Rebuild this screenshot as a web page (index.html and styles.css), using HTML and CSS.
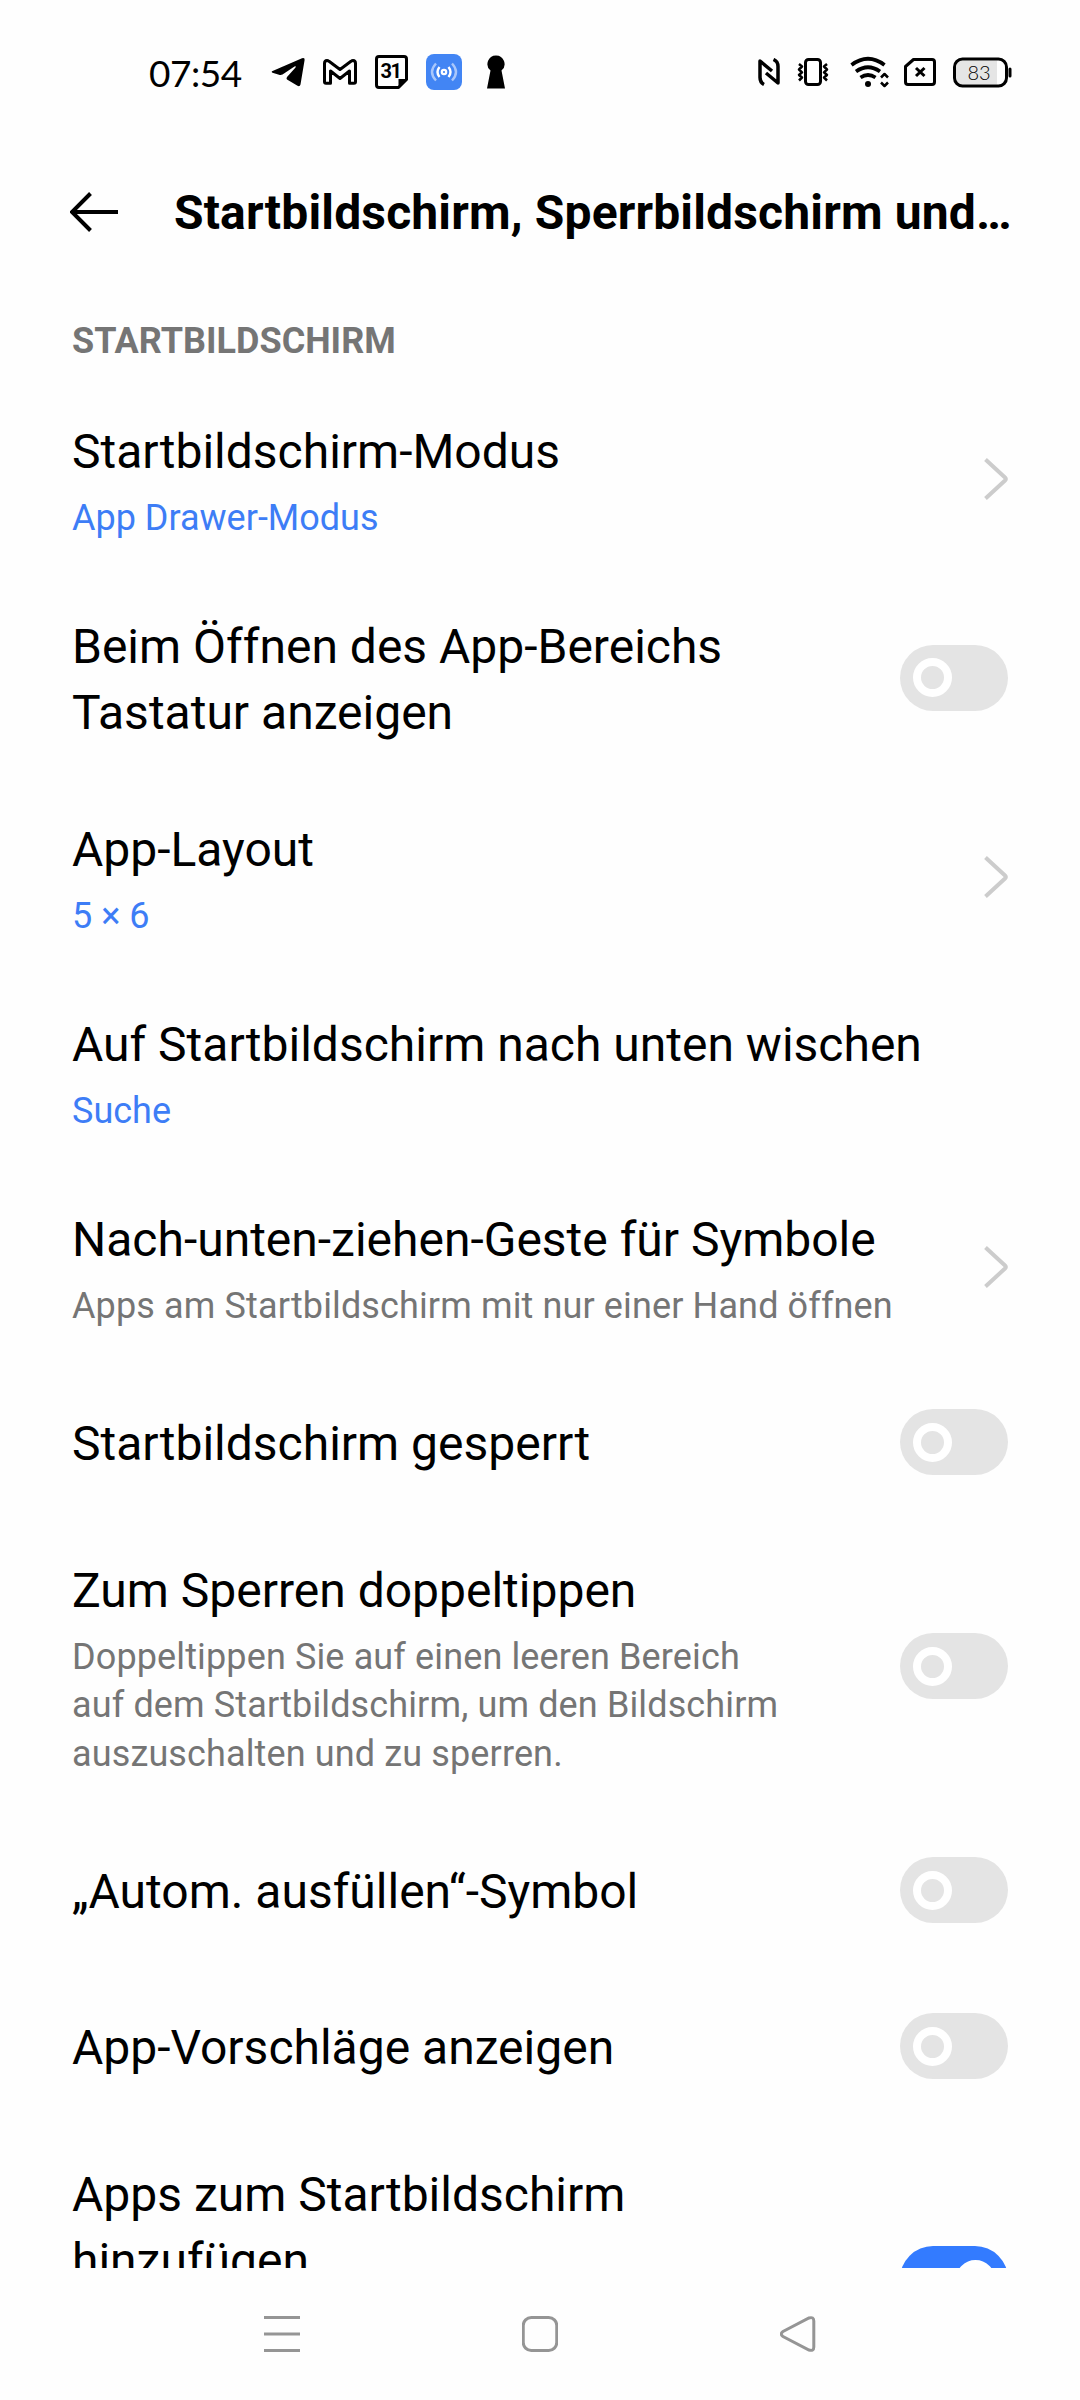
FILE: index.html
```html
<!DOCTYPE html>
<html lang="de">

<head>
    <meta charset="UTF-8">
    <meta name="viewport" content="width=device-width, initial-scale=1.0">
    <title>Startbildschirm</title>
    <link rel="stylesheet" href="styles.css">
</head>

<body>
    <div class="screen">

        <!-- Status bar -->
        <div class="status-bar">
            <div class="status-left">
                <span class="clock">07:54</span>
                <svg class="icon" width="34" height="30" viewBox="0 0 34 30">
                    <path d="M1 14.200 31 1.200Q34 .3 33.600 3L29.500 27.500Q28.800 30 26.500 28.800L16 22.500Q15 21.500 16 20L24.500 10.500Q25.500 8.500 23.500 9.500L11.500 17.500Q10 18.300 8 17.800L1.500 15.800Q0 14.800 1 14.200Z" />
                </svg>
                <svg class="icon line" width="34" height="26" viewBox="0 0 34 26">
                    <path d="M3 24.200q-1.500 0-1.500-1.500V4.500q0-3 2.500-3 1 0 2 .8L17 10.500 28 2.300q1-.8 2-.8 2.500 0 2.500 3v18.200q0 1.500-1.500 1.500h-4.500V12L17 19.500 7.500 12v12.200Z" />
                </svg>
                <svg class="icon line" width="33" height="34" viewBox="0 0 33 34">
                    <path d="M4 1.500h25q2.500 0 2.500 2.500v20.500l-8 8H4q-2.500 0-2.500-2.500V4q0-2.500 2.500-2.500Z" />
                    <path class="solid" d="M31.500 24h-8v8.500Z" />
                    <text class="calendar-day" x="15.500" y="23">31</text>
                </svg>
                <svg class="icon" width="36" height="36" viewBox="0 0 36 36">
                    <rect width="36" height="36" rx="8" fill="#4285f4" />
                    <circle cx="18" cy="18" r="2.200" fill="none" stroke="#fff" stroke-width="2.200" />
                    <path d="M13.500 13q-4 5 0 10M22.500 13q4 5 0 10" fill="none" stroke="#fff" stroke-width="2.400" />
                    <path d="M10 9.500q-8 8.500 0 17M26 9.500q8 8.500 0 17" fill="none" stroke="#a9c7fb" stroke-width="2.400" />
                </svg>
                <svg class="icon keyhole" width="18" height="34" viewBox="0 0 18 34">
                    <path d="M9 .5a8.500 8.500 0 0 1 5.500 15L18 33.500H0L3.500 15.500A8.500 8.500 0 0 1 9 .5Z" />
                </svg>
            </div>
            <div class="status-right">
                <svg class="icon line nfc" width="22" height="28" viewBox="0 0 22 28">
                    <path d="M6 26.500q-4-2-4-7V3L14 13M15.500 1.500q4.500 2 4.500 7V25L8 15" />
                </svg>
                <svg class="icon line" width="32" height="28" viewBox="0 0 32 28">
                    <rect x="8.500" y="1.500" width="15" height="25" rx="3" />
                    <path class="thin" d="M2 6l3 2.500L2 11.500l3 2.800-3 2.700 3 2.500-3 3M30 6l-3 2.500 3 3-3 2.800 3 2.700-3 2.500 3 3" />
                </svg>
                <svg class="icon line wifi" width="40" height="32" viewBox="0 0 40 32">
                    <path d="M2.500 9Q19-3.500 35.500 9M7 15.500Q19 7 31 15.500M11.500 21.500Q19 16.500 26.500 21.500" />
                    <circle class="solid" cx="19" cy="28" r="3" />
                    <path class="thin" d="M32 21.500l3.500-3.500 3.500 3.500M32 26.500l3.500 3.500 3.500-3.500" />
                </svg>
                <svg class="icon line" width="32" height="28" viewBox="0 0 32 28">
                    <path d="M9.500 1.500H28q2.500 0 2.500 2.500v20q0 2.500-2.500 2.500H4q-2.500 0-2.500-2.500V8.500Z" />
                    <path d="M12 10l8.500 8M20.500 10l-8.500 8" />
                </svg>
                <svg class="icon" width="59" height="31" viewBox="0 0 59 31">
                    <path d="M44 3.500H9Q3 3.500 3 9.500v12q0 6 6 6h35Z" fill="#e5e5e5" />
                    <rect x="1.500" y="2" width="52" height="27" rx="8" fill="none" stroke="#000" stroke-width="3" />
                    <rect x="55.500" y="10.500" width="3" height="10" rx="1.500" />
                    <text class="battery-level" x="26" y="22.500">83</text>
                </svg>
            </div>
        </div>

        <!-- Title bar -->
        <div class="title-bar">
            <svg class="back" width="48" height="40" viewBox="0 0 48 40">
                <path d="M20.500 1.500 2 20l18.500 18.500M2 20h46" />
            </svg>
            <h1>Startbildschirm, Sperrbildschirm und…</h1>
        </div>

        <!-- Settings list -->
        <div class="settings">
            <h2>STARTBILDSCHIRM</h2>

            <div class="row">
                <div class="label">
                    <p class="name">Startbildschirm-Modus</p>
                    <p class="value">App Drawer-Modus</p>
                </div>
                <svg class="chevron" width="24" height="42" viewBox="0 0 24 42"><path d="M1.500 1.500 21 19.500q1.500 1.500 0 3L1.500 40.500" /></svg>
            </div>

            <div class="row">
                <div class="label">
                    <p class="name">Beim Öffnen des App-Bereichs Tastatur anzeigen</p>
                </div>
                <div class="switch"></div>
            </div>

            <div class="row">
                <div class="label">
                    <p class="name">App-Layout</p>
                    <p class="value">5 × 6</p>
                </div>
                <svg class="chevron" width="24" height="42" viewBox="0 0 24 42"><path d="M1.500 1.500 21 19.500q1.500 1.500 0 3L1.500 40.500" /></svg>
            </div>

            <div class="row">
                <div class="label">
                    <p class="name">Auf Startbildschirm nach unten wischen</p>
                    <p class="value">Suche</p>
                </div>
            </div>

            <div class="row">
                <div class="label">
                    <p class="name">Nach-unten-ziehen-Geste für Symbole</p>
                    <p class="hint">Apps am Startbildschirm mit nur einer Hand öffnen</p>
                </div>
                <svg class="chevron" width="24" height="42" viewBox="0 0 24 42"><path d="M1.500 1.500 21 19.500q1.500 1.500 0 3L1.500 40.500" /></svg>
            </div>

            <div class="row">
                <div class="label">
                    <p class="name">Startbildschirm gesperrt</p>
                </div>
                <div class="switch"></div>
            </div>

            <div class="row">
                <div class="label">
                    <p class="name">Zum Sperren doppeltippen</p>
                    <p class="hint">Doppeltippen Sie auf einen leeren Bereich auf dem Startbildschirm, um den Bildschirm auszuschalten und zu sperren.</p>
                </div>
                <div class="switch"></div>
            </div>

            <div class="row">
                <div class="label">
                    <p class="name">„Autom. ausfüllen“-Symbol</p>
                </div>
                <div class="switch"></div>
            </div>

            <div class="row">
                <div class="label">
                    <p class="name">App-Vorschläge anzeigen</p>
                </div>
                <div class="switch"></div>
            </div>

            <div class="row last">
                <div class="label">
                    <p class="name">Apps zum Startbildschirm hinzufügen</p>
                </div>
                <div class="switch on"></div>
            </div>
        </div>

        <!-- Navigation bar -->
        <div class="nav-bar">
            <svg width="36" height="36" viewBox="0 0 36 36"><path d="M0 1.500h36M0 18h36M0 34.500h36" /></svg>
            <svg width="36" height="36" viewBox="0 0 36 36"><rect x="1.250" y="1.500" width="33.500" height="33" rx="8" /></svg>
            <svg width="36" height="36" viewBox="0 0 36 36"><path d="M29 2Q33.800 .5 33.800 5v26q0 4.500-4.800 3L3 20.500q-3.500-2.500 0-5Z" /></svg>
        </div>

    </div>
</body>

</html>
```
FILE: styles.css
```css
*,
*::before {
    box-sizing: border-box;
}

body {
    margin: 0;
    background-color: #fefefe;
    color: #000;
    font-family: Roboto, sans-serif;
}

h1,
h2,
p {
    margin: 0;
}

.screen {
    display: flex;
    flex-direction: column;
    width: 1080px;
    height: 2400px;
    overflow: hidden;
}

/* Status bar */
.status-bar {
    display: flex;
    justify-content: space-between;
    flex-shrink: 0;
    height: 144px;
    padding: 0 68px 0 149px;
}

.status-left,
.status-right {
    display: flex;
    align-items: center;
    height: 144px;
}

.status-left {
    gap: 18px;
}

.status-right {
    gap: 17px;
}

.clock {
    width: 104px;
    font-family: Lato, sans-serif;
    font-size: 37px;
    letter-spacing: -0.5px;
}

.keyhole {
    margin-left: 7px;
}

.line {
    fill: none;
    stroke: #000;
    stroke-width: 3;
    stroke-linejoin: round;
}

.nfc {
    stroke-width: 3.5;
}

.wifi {
    margin: 0 -2px 0 3px;
    stroke-width: 3.8;
}

.line .thin {
    stroke-width: 2.5;
}

.line .solid {
    fill: #000;
    stroke: none;
}

.calendar-day {
    fill: #000;
    stroke: none;
    font-size: 20px;
    font-weight: 700;
    letter-spacing: -1.5px;
    text-anchor: middle;
}

.battery-level {
    font-family: Lato, sans-serif;
    font-size: 20px;
    font-weight: 300;
    text-anchor: middle;
}

/* Title bar */
.title-bar {
    display: flex;
    align-items: center;
    flex-shrink: 0;
    gap: 56px;
    height: 136px;
    padding: 0 60px 0 70px;
}

.back {
    flex-shrink: 0;
    fill: none;
    stroke: #000;
    stroke-width: 4;
}

h1 {
    padding-top: 2px;
    font-size: 48px;
    font-weight: 700;
    letter-spacing: 0.16px;
    line-height: 64px;
    white-space: nowrap;
}

/* Settings list */
.settings {
    flex: 1;
    min-height: 0;
    overflow: hidden;
}

h2 {
    height: 101px;
    padding: 37px 72px 0;
    color: #757575;
    font-size: 36px;
    font-weight: 700;
    line-height: 48px;
}

.row {
    display: flex;
    align-items: center;
    justify-content: space-between;
    min-height: 156px;
    padding: 34px 72px;
}

.row.last {
    align-items: flex-start;
    min-height: 312px;
}

.label {
    flex: 1;
    padding-top: 4px;
}

.name {
    font-size: 48px;
    line-height: 65.5px;
}

.value,
.hint {
    margin-top: 9px;
    font-size: 36px;
    line-height: 48.5px;
}

.value {
    color: #3d7df6;
}

.hint {
    color: #757575;
    letter-spacing: 0.13px;
}

.chevron {
    fill: none;
    stroke: #ccc;
    stroke-width: 4;
}

.switch {
    display: flex;
    align-items: center;
    width: 108px;
    height: 66px;
    margin-left: 110px;
    padding: 0 13px;
    border-radius: 33px;
    background-color: #e4e4e4;
}

.switch::before {
    content: "";
    width: 39px;
    height: 39px;
    border: 8px solid #fff;
    border-radius: 50%;
}

.switch.on {
    justify-content: flex-end;
    margin-top: 88px;
    background-color: #337bff;
}

.switch.on::before {
    background-color: #fff;
}

/* Navigation bar */
.nav-bar {
    display: flex;
    align-items: center;
    justify-content: space-between;
    flex-shrink: 0;
    height: 132px;
    padding: 0 264px;
}

.nav-bar svg {
    fill: none;
    stroke: #959595;
    stroke-width: 3;
}
```
